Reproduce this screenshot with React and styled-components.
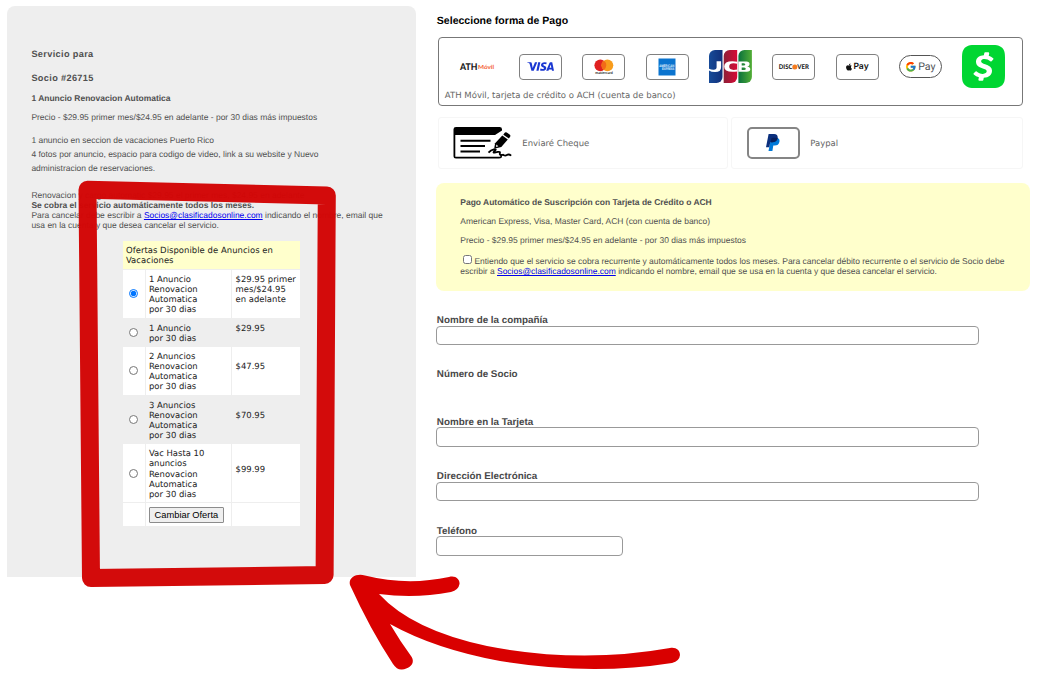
import React, { useState } from "react";
import styled, { createGlobalStyle } from "styled-components";
import { FaApple } from "react-icons/fa";
import { FcGoogle } from "react-icons/fc";
import { SiVisa, SiCashapp } from "react-icons/si";

const GlobalStyle = createGlobalStyle`
  * {
    box-sizing: border-box;
  }
  body {
    margin: 0;
    background: #ffffff;
    color: #505050;
    font-family: "Liberation Sans", Arial, sans-serif;
    font-size: 8.48px;
    text-rendering: geometricPrecision;
  }
  a {
    color: #0000ee;
  }
  svg {
    overflow: visible;
  }
`;

const Page = styled.main`
  position: relative;
  display: flex;
  align-items: flex-start;
  width: 1039px;
  height: 680px;
  overflow: hidden;
`;

const Summary = styled.section`
  width: 409px;
  height: 570.5px;
  margin: 6px 0 0 7px;
  padding: 35.75px 0 0 24.4px;
  background: #eeeeee;
  border-radius: 8px 8px 0 0;
`;

const Line = styled.p`
  margin: ${(props) => props.$top || 0}px 0 0;
  line-height: ${(props) => props.$height || 10}px;
  font-weight: ${(props) => (props.$bold ? "bold" : "normal")};
  white-space: nowrap;
`;

const Heading = styled(Line)`
  font-size: 9.2px;
  font-weight: bold;
  line-height: 24.7px;
  letter-spacing: 0.34px;
`;

const Offers = styled.div`
  display: grid;
  grid-template-columns: 22px 85px 68.5px;
  gap: 1px;
  width: 177.5px;
  margin: 11.5px 0 0 91.4px;
  color: #222222;
  font-family: "DejaVu Sans", Verdana, sans-serif;
  font-size: 8.45px;
  line-height: 10.1px;
  white-space: pre-line;
`;

const OffersTitle = styled.div`
  grid-column: 1 / -1;
  padding: 3.9px 3.2px 3.3px;
  background: #ffffcc;
  letter-spacing: 0.04px;
`;

const Cell = styled.div`
  display: flex;
  align-items: center;
  padding: 4px 3.1px 3.3px;
  background: ${(props) => (props.$shaded ? "#eeeeee" : "#ffffff")};
`;

const RadioCell = styled(Cell)`
  justify-content: center;
  padding: 0;
`;

const PriceCell = styled(Cell)`
  padding-left: 3.8px;
  padding-bottom: 13.3px;
`;

const Radio = styled.input`
  width: 9px;
  height: 9px;
  margin: 0;
`;

const ChangeButton = styled.button`
  width: 75px;
  height: 15.5px;
  padding: 0;
  border: 1px solid #8c8c8c;
  border-radius: 1px;
  background: #efefef;
  color: #000000;
  font-family: "Liberation Sans", Arial, sans-serif;
  font-size: 9.3px;
  line-height: 12px;
  white-space: nowrap;
`;

const Payment = styled.section`
  width: 593.5px;
  margin: 14.5px 0 0 20.3px;
`;

const Title = styled.h1`
  margin: 0;
  padding-left: 0.5px;
  color: #000000;
  font-size: 10.55px;
  line-height: 13.6px;
`;

const CardOption = styled.div`
  width: 584.5px;
  height: 69px;
  margin: 9.2px 0 0 2px;
  padding-left: 5.5px;
  border: 1px solid #777777;
  border-radius: 4px;
  font-family: "DejaVu Sans", Verdana, sans-serif;
  font-size: 8.54px;
  color: #666666;
`;

const Logos = styled.div`
  display: flex;
  align-items: center;
  gap: 20.3px;
  height: 52.6px;
  padding: 4px 0 0 11px;
`;

const Logo = styled.div`
  display: flex;
  flex: 0 0 43px;
  align-items: center;
  justify-content: center;
  height: 43px;
`;

const CardFrame = styled.div`
  display: flex;
  align-items: center;
  justify-content: center;
  width: 43px;
  height: ${(props) => (props.$pill ? 23 : 26)}px;
  border: ${(props) => (props.$pill ? "1px solid #555555" : "1.5px solid #808080")};
  border-radius: ${(props) => (props.$pill ? 12 : 4)}px;
  background: #ffffff;
`;

const PayText = styled.span`
  margin-left: ${(props) => props.$gap || 0}px;
  color: ${(props) => props.$color || "#111111"};
  font-family: ${(props) => props.$font || "Inter"}, sans-serif;
  font-size: ${(props) => props.$size}px;
  font-weight: ${(props) => props.$weight || 500};
  line-height: 12px;
`;

const Options = styled.div`
  display: flex;
  gap: 3px;
  margin: 10.7px 0 0 2px;
`;

const Option = styled.div`
  display: flex;
  align-items: center;
  width: ${(props) => props.$width}px;
  height: 52px;
  padding-left: ${(props) => props.$indent}px;
  gap: ${(props) => props.$gap}px;
  border: 1px solid #f6f6f6;
  border-radius: 3px;
  color: #666666;
  font-family: "DejaVu Sans", Verdana, sans-serif;
  font-size: 8.48px;
`;

const PaypalFrame = styled(CardFrame)`
  width: 53px;
  height: 32px;
  border: 2px solid #858585;
  border-radius: 5px;
`;

const Terms = styled.div`
  height: 108px;
  margin-top: 13.6px;
  padding: 13px 0 0 24px;
  border-radius: 8px;
  background: #ffffcc;
`;

const Check = styled.input`
  width: 9.5px;
  height: 9.5px;
  margin: 0 2.3px 0 2.3px;
  vertical-align: -0.5px;
`;

const Form = styled.form`
  margin-top: 22.6px;
`;

const Field = styled.div`
  display: flex;
  flex-direction: column;
  height: ${(props) => props.$height}px;
`;

const Label = styled.label`
  padding: 1.7px 0 0 0.5px;
  font-size: 9.84px;
  font-weight: bold;
  line-height: 12px;
  color: #484848;
`;

const TextInput = styled.input`
  width: ${(props) => props.$width || 543}px;
  height: 19.5px;
  margin: -1.2px 0 0;
  border: 1px solid #999999;
  border-radius: 4px;
  outline: none;
`;

const Marker = styled.svg`
  position: absolute;
  top: 0;
  left: 0;
  pointer-events: none;
`;

const AthLogo = () => (
  <svg width='43' height='14' viewBox='0 0 43 14'>
    <text x='4' y='10.1' fontFamily='Lato' fontSize='9.2' fontWeight='900' fill='#1c1c1c' textLength='17.4' lengthAdjust='spacingAndGlyphs'>ATH</text>
    <text x='22' y='9' fontFamily='Lato' fontSize='5.7' fontWeight='900' fill='#f4673c' textLength='16' lengthAdjust='spacingAndGlyphs'>Móvil</text>
  </svg>
);

const MastercardLogo = () => (
  <svg width='24' height='18' viewBox='0 0 24 18'>
    <circle cx='8.3' cy='7.3' r='5.9' fill='#e02020' />
    <circle cx='15.4' cy='7.3' r='5.9' fill='#f89c1c' />
    <path d='M11.85 2.5a6 6 0 0 1 0 9.6a6 6 0 0 1 0-9.6z' fill='#f26a18' />
    <text x='3.2' y='16.4' fontFamily='Lato' fontSize='3.7' fontWeight='700' fill='#222' textLength='17.5' lengthAdjust='spacingAndGlyphs'>mastercard</text>
  </svg>
);

const AmexLogo = () => (
  <svg width='18' height='18' viewBox='0 0 18 18'>
    <path d='M.5.5h17v17H.5z' fill='#0b74cf' />
    <text x='1.2' y='8.6' fontFamily='Liberation Sans' fontSize='3.6' fontWeight='700' fill='#e4f2fd' textLength='15' lengthAdjust='spacingAndGlyphs'>AMERICAN</text>
    <text x='4' y='12' fontFamily='Liberation Sans' fontSize='3.6' fontWeight='700' fill='#e4f2fd' textLength='12.2' lengthAdjust='spacingAndGlyphs'>EXPRESS</text>
  </svg>
);

const JcbLogo = () => (
  <svg width='43' height='33' viewBox='0 0 43 33'>
    <defs>
      <linearGradient id='jcbBlue'>
        <stop offset='0' stopColor='#174b98' />
        <stop offset='1' stopColor='#12307a' />
      </linearGradient>
      <linearGradient id='jcbRed'>
        <stop offset='0' stopColor='#8c1f37' />
        <stop offset='1' stopColor='#d80a35' />
      </linearGradient>
      <linearGradient id='jcbGreen'>
        <stop offset='0' stopColor='#0a713d' />
        <stop offset='1' stopColor='#52ad35' />
      </linearGradient>
    </defs>
    <path d='M6 0h7.500v27a6 6 0 0 1-6 6H0V6a6 6 0 0 1 6-6z' fill='url(#jcbBlue)' />
    <path d='M20.700 0h7.500v27a6 6 0 0 1-6 6h-7.500V6a6 6 0 0 1 6-6z' fill='url(#jcbRed)' />
    <path d='M35.400 0h7.500v27a6 6 0 0 1-6 6h-7.500V6a6 6 0 0 1 6-6z' fill='url(#jcbGreen)' />
    <path d='M7.600 11.200h4.500v6q0 4.900-6 4.900Q2.200 22.100 0 20.600v-1.800q2.500 1.200 4.800 1q2.800-.2 2.800-2.600z' fill='#fff' />
    <path d='M28.200 11.700v2q-8-1.500-8 2.900t8 2.900v2q-13 1.700-13-4.900t13-4.900z' fill='#fff' />
    <path
      d='M29.400 11.500h8q3.200.2 3.200 2.500t-2.500 2.400q3.200.4 3.200 2.800t-3.500 2.600h-8.400zM32.700 13.200v2.400h2.200q1.400-.2 1.400-1.200t-1.400-1.200zM32.700 17.400v2.700h2.500q1.600-.2 1.600-1.400t-1.600-1.300z'
      fill='#fff'
      fillRule='evenodd'
    />
  </svg>
);

const DiscoverLogo = () => (
  <svg width='34' height='10' viewBox='0 0 34 10'>
    <text x='1.800' y='7.300' fontFamily='Lato' fontSize='6.500' fontWeight='900' fill='#222' textLength='13.600' lengthAdjust='spacingAndGlyphs'>DISC</text>
    <circle cx='17.800' cy='5' r='2.500' fill='#f47b20' />
    <text x='20.300' y='7.300' fontFamily='Lato' fontSize='6.500' fontWeight='900' fill='#222' textLength='11.700' lengthAdjust='spacingAndGlyphs'>VER</text>
  </svg>
);

const ChequeIcon = () => (
  <svg width='60' height='34' viewBox='0 0 60 34'>
    <path d='M49 4.500V3.300Q49 1 46.500 1H3Q.5 1 .5 3.300V30q0 2.500 2.500 2.500h43q3 0 3-2.200v-2.100h-1.700v2.500H2.300V9H42z' fill='#000' />
    <path d='M7.500 14.700h30M7.500 20.100h24.500M7.500 25.500h19.500' stroke='#000' strokeWidth='2' fill='none' />
    <path d='M51.300 7.300q1-1.800 2.500-.8l2.800 1.900q1.400 1 .5 2.400l-1.200 1.600-5.600-3.600z' fill='#000' />
    <path d='M49.300 9.600l5.500 3.800-6.500 7.600-6.200 1.500-.8-.6.800-4.700z' fill='#000' />
    <path d='M43.400 18.600l-.3 2.300 2.200-.6z' fill='#fff' />
    <path d='M35.500 26.600q2-2.600 6-3.500q2.600 0-.2 2.200q-1.800 1.500.5 1.400l3-.8q2.800-.5 2 1.600q-.5 1.800 2.300 1.500q1.500-.6 1.800.3q1.500.8 3-.3q1.900-1.300 4.300.6' stroke='#000' strokeWidth='1.800' fill='none' />
  </svg>
);

const PaypalIcon = () => (
  <svg width='14' height='17' viewBox='0 0 14 17'>
    <path d='M5 4h6.700q2.400 1.200 1.700 4q-.8 3.600-4.700 3.600H7.300L6.400 17H2.500z' fill='#0079d8' />
    <path d='M2.600 0H8q4 .2 3.700 3.700Q11 8 6.500 8.300H4.200L3.300 13.300H0z' fill='#0b2f7d' />
    <path d='M4.700 8.300l.7-3.700q.2-.8 1.200-.8h5.100Q11.200 8 6.500 8.300z' fill='#071f5c' />
  </svg>
);

const offers = [
  {
    name: "1 Anuncio\nRenovacion\nAutomatica\npor 30 dias",
    price: "$29.95 primer\nmes/$24.95\nen adelante",
  },
  { name: "1 Anuncio\npor 30 dias", price: "$29.95" },
  { name: "2 Anuncios\nRenovacion\nAutomatica\npor 30 dias", price: "$47.95" },
  { name: "3 Anuncios\nRenovacion\nAutomatica\npor 30 dias", price: "$70.95" },
  {
    name: "Vac Hasta 10\nanuncios\nRenovacion\nAutomatica\npor 30 dias",
    price: "$99.99",
  },
];

const App = () => {
  const [selected, setSelected] = useState(0);
  const [accepted, setAccepted] = useState(false);

  return (
    <Page>
      <GlobalStyle />
      <Summary>
        <Heading>Servicio para</Heading>
        <Heading>Socio #26715</Heading>
        <Line $bold $height={14.1}>1 Anuncio Renovacion Automatica</Line>
        <Line $top={4.75} $height={14}>
          Precio - $29.95 primer mes/$24.95 en adelante - por 30 dias más impuestos
        </Line>
        <Line $top={10.4} $height={13.6}>
          1 anuncio en seccion de vacaciones Puerto Rico
          <br />
          4 fotos por anuncio, espacio para codigo de video, link a su website y Nuevo
          <br />
          administracion de reservaciones.
        </Line>
        <Line $top={14.8}>
          Renovacion y cargo automatic $29.95 el primer mes, $24.95 en adelante
        </Line>
        <Line $bold>Se cobra el servicio automáticamente todos los meses.</Line>
        <Line>
          Para cancelar debe escribir a{" "}
          <a href='mailto:Socios@clasificadosonline.com'>Socios@clasificadosonline.com</a>{" "}
          indicando el nombre, email que
          <br />
          usa en la cuenta y que desea cancelar el servicio.
        </Line>
        <Offers>
          <OffersTitle>{"Ofertas Disponible de Anuncios en\nVacaciones"}</OffersTitle>
          {offers.map((offer, index) => (
            <React.Fragment key={index}>
              <RadioCell $shaded={index % 2 === 1}>
                <Radio
                  type='radio'
                  name='offer'
                  checked={selected === index}
                  onChange={() => setSelected(index)}
                />
              </RadioCell>
              <Cell $shaded={index % 2 === 1}>{offer.name}</Cell>
              <PriceCell $shaded={index % 2 === 1}>{offer.price}</PriceCell>
            </React.Fragment>
          ))}
          <Cell />
          <Cell>
            <ChangeButton type='button'>Cambiar Oferta</ChangeButton>
          </Cell>
          <Cell />
        </Offers>
      </Summary>

      <Payment>
        <Title>Seleccione forma de Pago</Title>
        <CardOption>
          <Logos>
            <Logo><AthLogo /></Logo>
            <Logo>
              <CardFrame><SiVisa size={27} color='#1a37d2' /></CardFrame>
            </Logo>
            <Logo>
              <CardFrame><MastercardLogo /></CardFrame>
            </Logo>
            <Logo>
              <CardFrame><AmexLogo /></CardFrame>
            </Logo>
            <Logo><JcbLogo /></Logo>
            <Logo>
              <CardFrame><DiscoverLogo /></CardFrame>
            </Logo>
            <Logo>
              <CardFrame>
                <FaApple size={8} color='#111111' />
                <PayText $size={8.6} $weight={600}>Pay</PayText>
              </CardFrame>
            </Logo>
            <Logo>
              <CardFrame $pill>
                <FcGoogle size={11.5} />
                <PayText $gap={1.5} $size={10.6} $font='Roboto' $color='#505357' $weight={400}>Pay</PayText>
              </CardFrame>
            </Logo>
            <Logo><SiCashapp size={43} color='#00d632' /></Logo>
          </Logos>
          <Line>ATH Móvil, tarjeta de crédito o ACH (cuenta de banco)</Line>
        </CardOption>
        <Options>
          <Option $width={290} $indent={14} $gap={9}>
            <ChequeIcon />
            Enviaré Cheque
          </Option>
          <Option $width={291.5} $indent={14.5} $gap={10.5}>
            <PaypalFrame><PaypalIcon /></PaypalFrame>
            Paypal
          </Option>
        </Options>
        <Terms>
          <Line $bold $height={13}>Pago Automático de Suscripción con Tarjeta de Crédito o ACH</Line>
          <Line $top={6.2} $height={13}>American Express, Visa, Master Card, ACH (con cuenta de banco)</Line>
          <Line $top={6.2} $height={13}>
            Precio - $29.95 primer mes/$24.95 en adelante - por 30 dias más impuestos
          </Line>
          <Line $top={7.7} $height={10.6}>
            <Check
              type='checkbox'
              checked={accepted}
              onChange={() => setAccepted(!accepted)}
            />
            Entiendo que el servicio se cobra recurrente y automáticamente todos los meses. Para
            cancelar débito recurrente o el servicio de Socio debe
            <br />
            escribir a{" "}
            <a href='mailto:Socios@clasificadosonline.com'>Socios@clasificadosonline.com</a>{" "}
            indicando el nombre, email que se usa en la cuenta y que desea cancelar el servicio.
          </Line>
        </Terms>
        <Form>
          <Field $height={54.2}>
            <Label>Nombre de la compañía</Label>
            <TextInput type='text' />
          </Field>
          <Field $height={47.5}>
            <Label>Número de Socio</Label>
          </Field>
          <Field $height={54.5}>
            <Label>Nombre en la Tarjeta</Label>
            <TextInput type='text' />
          </Field>
          <Field $height={54.5}>
            <Label>Dirección Electrónica</Label>
            <TextInput type='text' />
          </Field>
          <Field $height={33}>
            <Label>Teléfono</Label>
            <TextInput type='text' $width={187} />
          </Field>
        </Form>
      </Payment>

      <Marker width='1039' height='680' viewBox='0 0 1039 680'>
        <path
          d='M87.500 189.800L326.800 195.500L324.600 575L91 578z'
          fill='none'
          stroke='#d20606'
          strokeOpacity='0.98'
          strokeWidth='18'
          strokeLinejoin='round'
        />
        <path
          d='M365 575.500Q407 586 449 577C456 575 460 580 459.500 584Q458.500 590 451 592Q415 599 379 594Q412 630 487 646Q580 664 670 648C676 647 680 650 680 655Q679.500 661 672 663Q590 676 500 661Q435 649 390 624Q400 641 411 656C416 663 410 669 402 669.500Q397 670 393 664Q370 629 350 585C348 578 356 573 365 575.500z'
          fill='#d90000'
        />
      </Marker>
    </Page>
  );
};

export default App;
